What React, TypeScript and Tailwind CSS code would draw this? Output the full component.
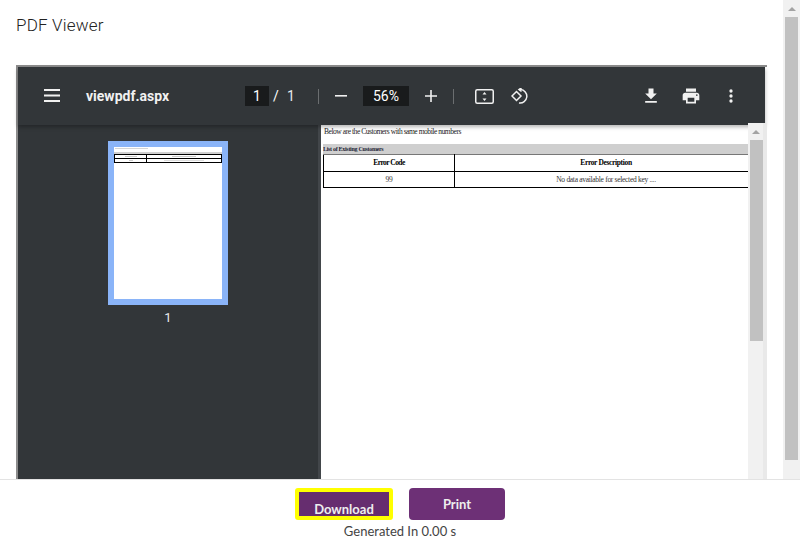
function Toolbar() {
  return (
    <div className="h-[58px] flex items-center bg-[#323639] text-white font-['Roboto',sans-serif] shadow-[0_2px_4px_rgba(0,0,0,0.3)] relative z-10">
      <svg className="ml-[26px] w-4 h-[13px] -mt-[1px]" viewBox="0 0 16 13" fill="#f1f1f1">
        <path d="M0 0h16v2H0zM0 5.5h16v2H0zM0 11h16v2H0z" />
      </svg>
      <div className="ml-[26px] w-[159px] text-[14px] font-bold text-[#f1f1f1]">viewpdf.aspx</div>
      <div className="w-6 h-5 bg-[#191b1c] text-[14px] leading-5 text-center">1</div>
      <div className="ml-1 w-[14px] text-[14px]">/</div>
      <div className="text-[14px] w-[31px] text-[#e8eaed]">1</div>
      <div className="w-px h-[15px] bg-[#6b6e70]" />
      <svg className="ml-4 w-3 h-3" viewBox="0 0 12 12" fill="#f1f1f1"><path d="M0 5h12v1.6H0z" /></svg>
      <div className="ml-4 w-[46px] h-5 bg-[#191b1c] text-[14px] leading-5 text-center">56%</div>
      <svg className="ml-4 w-3 h-3" viewBox="0 0 12 12" fill="#f1f1f1"><path d="M0 5.2h12v1.6H0zM5.2 0h1.6v12H5.2z" /></svg>
      <div className="ml-4 w-px h-[15px] bg-[#6b6e70]" />
      <svg className="ml-[21px] w-[19px] h-[15px]" viewBox="0 0 19 15" fill="none">
        <rect x="0.75" y="0.75" width="17.5" height="13.5" rx="1.5" stroke="#f1f1f1" strokeWidth="1.5" />
        <path d="M9.5 3l2 2.5h-4zM9.5 12l-2-2.5h4z" fill="#f1f1f1" />
      </svg>
      <svg className="ml-[17px] w-[18px] h-[16px]" viewBox="0 0 18 16" fill="none" stroke="#f1f1f1" strokeWidth="1.5">
        <path d="M1 8l4.5-4.5L10 8l-4.5 4.5z" />
        <path d="M8 1.5h1.5a6.75 6.75 0 1 1-1.5 13.4" />
        <path d="M10.5 0L8 1.5l2.5 2" />
      </svg>
      <svg className="ml-[112px] w-5 h-5" viewBox="0 0 24 24" fill="#f1f1f1">
        <path d="M19 9h-4V3H9v6H5l7 7 7-7zM5 18v2h14v-2H5z" />
      </svg>
      <svg className="ml-5 w-5 h-5" viewBox="0 0 24 24" fill="#f1f1f1">
        <path d="M19 8H5c-1.66 0-3 1.34-3 3v6h4v4h12v-4h4v-6c0-1.66-1.34-3-3-3zm-3 11H8v-5h8v5zm3-7c-.55 0-1-.45-1-1s.45-1 1-1 1 .45 1 1-.45 1-1 1zm-1-9H6v4h12V3z" />
      </svg>
      <svg className="ml-5 w-5 h-5" viewBox="0 0 24 24" fill="#f1f1f1">
        <circle cx="12" cy="6" r="2" /><circle cx="12" cy="12" r="2" /><circle cx="12" cy="18" r="2" />
      </svg>
    </div>
  );
}

function Thumbnail() {
  return (
    <div className="w-[300px] shrink-0 border-r-[3px] border-[#42464a] bg-[#323639] pt-4 flex flex-col items-center box-content">
      <div className="w-[120px] h-[164px] border-[6px] border-[#8ab4f8] bg-white">
        <div className="mt-px ml-px h-px w-[33px] bg-[#d5d5d5]" />
        <div className="mt-[3px] h-[2px] bg-[#cfcfcf]" />
        <div className="grid grid-cols-[32px_1fr] grid-rows-2 h-[9px] border border-black">
          <div className="border-r border-b border-black flex items-center justify-center">
            <div className="h-px w-3 bg-[#ccc]" />
          </div>
          <div className="border-b border-black flex items-center justify-center">
            <div className="h-px w-6 bg-[#ccc]" />
          </div>
          <div className="border-r border-black flex items-center justify-center">
            <div className="h-px w-1 bg-[#ccc]" />
          </div>
          <div className="flex items-center justify-center">
            <div className="h-px w-10 bg-[#ddd]" />
          </div>
        </div>
      </div>
      <div className="mt-[3px] text-[13px] text-[#e8eaed] font-['Roboto',sans-serif]">1</div>
    </div>
  );
}

function PdfPage() {
  return (
    <div className="flex-1 bg-white font-['Liberation_Serif',serif] text-black overflow-hidden pt-[2px] pl-[2px] antialiased">
      <div className="pl-px text-[7.5px] leading-[9px] tracking-[-0.45px] text-[#222]">Below are the Customers with same mobile numbers</div>
      <div className="mt-[8px] h-[10px] bg-[#cfcfcf] text-[6px] leading-[10px] tracking-[-0.3px] font-bold text-[#223]">List of Existing Customers</div>
      <table className="w-full border-collapse table-fixed text-center text-[7.5px]">
        <tbody>
          <tr className="h-[17px] font-bold">
            <td className="w-[131px] border border-black border-t-[#777] tracking-[-0.55px]">Error Code</td>
            <td className="pl-[9px] border border-black border-t-[#777] border-r-0 tracking-[-0.35px]">Error Description</td>
          </tr>
          <tr className="h-4 text-[#333]">
            <td className="border border-black tracking-[-0.3px]">99</td>
            <td className="pl-[9px] border border-black border-r-0 tracking-[-0.3px]">No data available for selected key ....</td>
          </tr>
        </tbody>
      </table>
    </div>
  );
}

export default function App() {
  return (
    <div className="w-[800px] h-[550px] flex flex-col overflow-hidden bg-white">
      <div className="h-[479px] flex overflow-hidden">
        <div className="w-[783px] px-4 pt-[15px]">
          <h1 className="text-[17px] leading-5 font-light text-[#222] font-['Roboto',sans-serif] tracking-[0.2px]">PDF Viewer</h1>
          <div className="mt-[30px] w-[751px] h-[420px] border-t-2 border-l-2 border-[#8c8c8c] flex flex-col">
            <div className="w-[747px]"><Toolbar /></div>
            <div className="flex-1 flex min-h-0">
              <Thumbnail />
              <PdfPage />
              <div className="w-[19px] -mt-[2px] bg-[#f1f1f1] border-r-[4px] border-[#e9e9e9] relative z-20">
                <div className="h-[17px] flex items-center justify-center pl-[1px]">
                  <svg className="w-2 h-1" viewBox="0 0 8 4" fill="#a3a3a3"><path d="M4 0l4 4H0z" /></svg>
                </div>
                <div className="ml-[2px] w-[13px] h-[201px] bg-[#c1c1c1]" />
              </div>
            </div>
          </div>
        </div>
        <div className="w-[17px] bg-[#f1f1f1]">
          <div className="h-[17px] flex items-center justify-center">
            <svg className="w-2 h-1" viewBox="0 0 8 4" fill="#a3a3a3"><path d="M4 0l4 4H0z" /></svg>
          </div>
          <div className="mx-[2px] h-[443px] bg-[#c1c1c1]" />
        </div>
      </div>
      <div className="flex-1 border-t border-[#e3e3e3] flex flex-col items-center font-['Lato',sans-serif]">
        <div className="mt-2 flex gap-4">
          <button className="w-[98px] h-8 border-4 border-[#ffff00] rounded-[3px] bg-[#662d6f] text-[#eee] text-[13px] font-bold pt-[7px] leading-5">Download</button>
          <button className="w-[96px] h-8 rounded-[4px] bg-[#6d3076] text-[#eee] text-[13px] font-bold leading-5 pb-[1px]">Print</button>
        </div>
        <div className="mt-px text-[13px] leading-5 text-[#444]">Generated In 0.00 s</div>
      </div>
    </div>
  );
}
